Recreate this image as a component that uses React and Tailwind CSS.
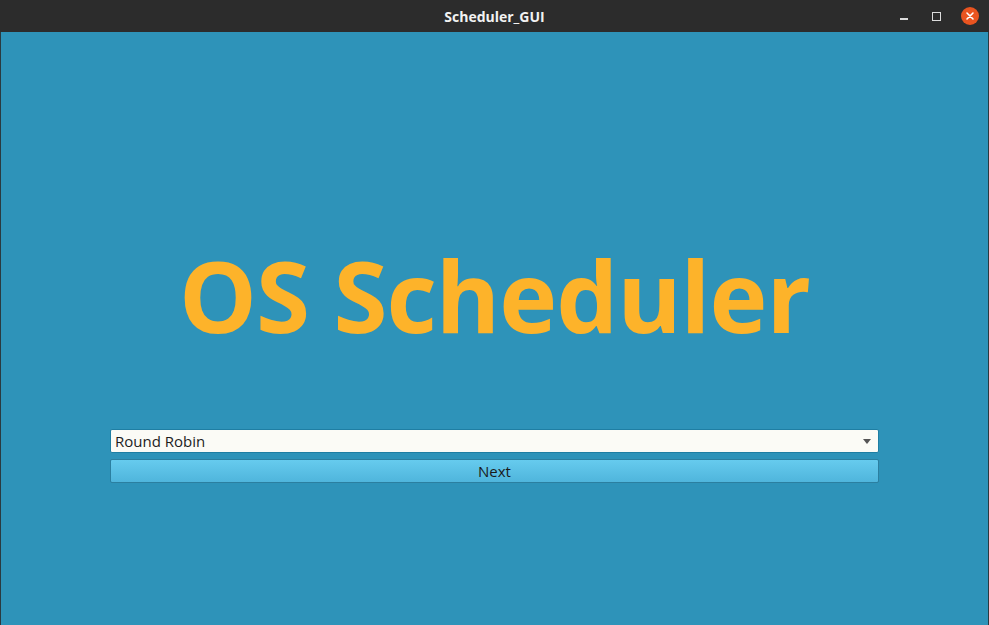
import React, { useState } from "react";

const App = () => {
  const [algo] = useState("Round Robin");

  return (
    <div className="w-[989px] h-[625px] flex flex-col bg-[#2c2c2c] overflow-hidden" style={{ fontFamily: '"Open Sans", "Noto Sans", sans-serif' }}>
      {/* title bar */}
      <div className="h-[32px] flex items-center relative shrink-0">
        <div className="flex-1 text-center text-[14px] font-bold text-[#f2f2f2]">
          Scheduler_GUI
        </div>
        <div className="absolute right-[10px] top-0 h-[32px] flex items-center">
          <div className="w-[33px] flex justify-center">
            <div className="w-[8px] h-[1.5px] bg-[#dcdcdc] mt-[6px]"></div>
          </div>
          <div className="w-[33px] flex justify-center">
            <div className="w-[9px] h-[9px] border border-[#dcdcdc]"></div>
          </div>
          <div className="w-[18px] h-[18px] rounded-full bg-[#e95420] flex items-center justify-center ml-[8px]">
            <svg width="10" height="10" viewBox="0 0 10 10">
              <path d="M2 2 L8 8 M8 2 L2 8" stroke="#fff" strokeWidth="1.6" strokeLinecap="round" />
            </svg>
          </div>
        </div>
      </div>

      {/* content */}
      <div className="flex-1 bg-[#2e93b9] border-x border-[#2a3a40] flex flex-col items-center">
        <h1 className="mt-[198px] text-[98px] leading-[130px] font-bold text-[#fdb32a] tracking-[-1px]">
          OS Scheduler
        </h1>
        <div className="mt-[69px] w-[769px] flex flex-col gap-[6px]">
          <div className="h-[24px] bg-[#fbfbf6] rounded-[2px] border border-[#1f7ea3] flex items-center justify-between pl-[4px] pr-[7px]">
            <span className="text-[15px] text-[#1d1d1d]">{algo}</span>
            <svg width="8" height="5" viewBox="0 0 8 5">
              <path d="M0 0 L8 0 L4 5 Z" fill="#555" />
            </svg>
          </div>
          <button className="h-[24px] rounded-[2px] border border-[#2b7fa0] bg-gradient-to-b from-[#66cbee] to-[#4fb5dc] text-[15px] text-[#1a1a1a] flex items-center justify-center">
            Next
          </button>
        </div>
      </div>
    </div>
  );
};

export default App;
